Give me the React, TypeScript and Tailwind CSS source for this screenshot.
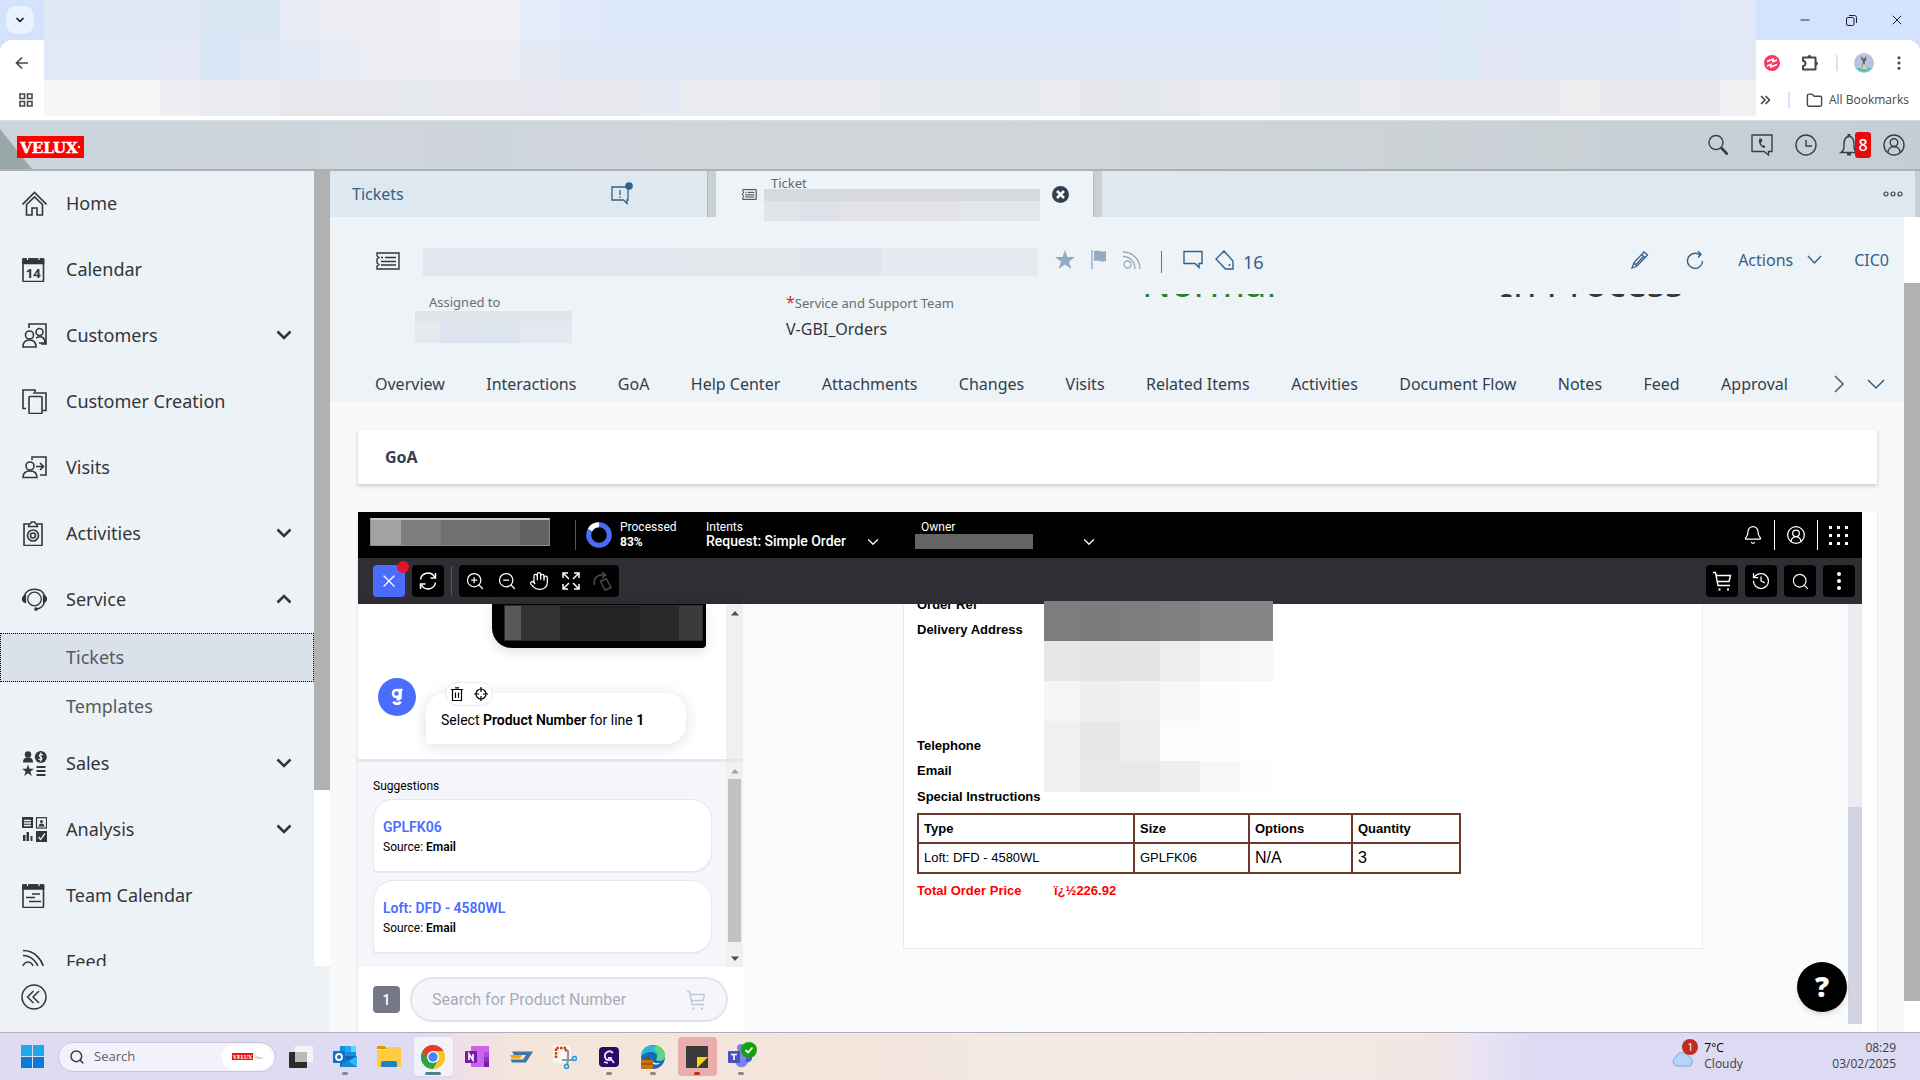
import type { ReactNode } from 'react'
import {
  Bell, ChevronDown, CircleUserRound, EllipsisVertical, Folder, Hand,
  History, Minus, Search, ShoppingCart, X, ZoomIn, ZoomOut
} from 'lucide-react'

type Cell = [span: number, color: string]

const tabStripCells: Cell[] = [
  [156, '#e0e7f7'], [40, '#dce7f6'], [40, '#dbe8f4'], [40, '#e7ecf6'], [80, '#eeeff5'], [40, '#efeef2'],
  [80, '#f1f0f5'], [40, '#e4ecfb'], [40, '#e0e9fa'], [840, '#dde8fa'], [40, '#dbe9f5'], [200, '#dee7f8'], [76, '#e2e8f8']
]
const addressCells: Cell[] = [
  [36, '#e2eaf9'], [40, '#e4ebf8'], [40, '#e4e9f7'], [40, '#e4e7f5'], [40, '#dae7f6'], [40, '#dfe8f6'],
  [40, '#e4e9f6'], [40, '#eaecf5'], [160, '#ecedf2'], [40, '#e5eaf5'], [160, '#e0e7f5'], [320, '#e1e6f5'],
  [400, '#e0e6f4'], [40, '#dce8f4'], [40, '#e2e6f5'], [200, '#e1e6f3'], [36, '#e4e9f8']
]
const bookmarkCells: Cell[] = [
  [36, '#f5f6f8'], [80, '#f4f5f7'], [40, '#efeff3'], [80, '#e9ebf0'], [120, '#e8e7ec'], [40, '#e6eaec'],
  [80, '#e8e8ed'], [40, '#e8e7f0'], [80, '#e8e9ed'], [40, '#e7eaf4'], [80, '#e9ebee'], [120, '#ebebef'],
  [160, '#e8ebee'], [40, '#ebeaee'], [40, '#e4e6eb'], [40, '#e2e7ea'], [40, '#e7e7ec'], [80, '#ebebef'],
  [80, '#e7ebee'], [40, '#ebebf0'], [160, '#e8eaee'], [40, '#ededf0'], [120, '#e9e9ee'], [36, '#f1f1f3']
]

function Cells({ cells, className = '' }: { cells: Cell[]; className?: string }) {
  return (
    <div className={`flex ${className}`} aria-hidden="true">
      {cells.map(([span, color], i) => (
        <div key={i} className="basis-0" style={{ flexGrow: span, backgroundColor: color }} />
      ))}
    </div>
  )
}

type IconProps = { w?: number; h?: number; sw?: number; box?: string; className?: string; children: ReactNode }

function Icon({ w = 25, h = 25, sw = 1.6, box, className = '', children }: IconProps) {
  return (
    <svg
      width={w}
      height={h}
      viewBox={box ?? `0 0 ${w} ${h}`}
      fill="none"
      stroke="currentColor"
      strokeWidth={sw}
      className={`shrink-0 ${className}`}
      aria-hidden="true"
    >
      {children}
    </svg>
  )
}

const icons = {
  home: (
    <Icon>
      <path d="M.5 13.500 12.500 1.500l12 12" />
      <path d="M4.500 13.500V24H10v-7h5v7h5.500V13.500l-8-7.700z" />
    </Icon>
  ),
  calendar: (
    <Icon>
      <rect x="1" y="2" width="20.500" height="22.500" rx="1" />
      <path d="M1 2h20.500v4.500H1z" fill="currentColor" />
      <path d="M5.500 0v3M17 0v3" stroke="#edf2f6" strokeWidth="1.200" />
      <text x="11.300" y="20.500" textAnchor="middle" fontSize="13" fontWeight="700" fill="currentColor" stroke="none" fontFamily="Noto Sans, sans-serif">14</text>
    </Icon>
  ),
  customers: (
    <Icon>
      <path d="M7 5V1h17v20h-5" />
      <circle cx="7.500" cy="12" r="4" />
      <path d="M1 24c0-5 3-7 6.500-7s6.500 2 6.500 7z" />
      <circle cx="17.500" cy="9" r="3.500" />
      <path d="M14 15c6-3 9 0 9 5h-6" />
    </Icon>
  ),
  creation: (
    <Icon>
      <path d="M4 19.500H1V1h12v2" />
      <path d="M11 4h13v17.500h-3" />
      <rect x="7" y="7.500" width="13" height="17" rx="1" />
    </Icon>
  ),
  visits: (
    <Icon>
      <path d="M10 5V2h14v18h-6" />
      <circle cx="8" cy="11" r="4" />
      <path d="M1 22.500c0-5 3-6.500 7-6.500s7 1.500 7 6.500z" />
      <path d="M14 11.500h7M18 8l3.500 3.500L18 15" />
    </Icon>
  ),
  activities: (
    <Icon>
      <path d="M7 3H2v21.500h18V3h-5" />
      <path d="M6.500 5.500c0-3 2-2 3-4.500h3c1 2.500 3 1.500 3 4.500z" />
      <circle cx="11" cy="14.500" r="5.500" />
      <circle cx="11" cy="14.500" r="2.500" />
    </Icon>
  ),
  service: (
    <Icon sw={1.3}>
      <circle cx="12.500" cy="12" r="6.800" />
      <path d="M2.500 9C5 0 20 0 22.500 9M22.500 15c-1 4-4 6.500-8 7" />
      <path d="M3.500 8.500v7C1.500 15 .5 14 .5 12s1-3 3-3.500zM21.500 8.500v7c2-.5 3-1.500 3-3.500s-1-3-3-3.500z" fill="currentColor" />
      <circle cx="14" cy="22" r="1.200" fill="currentColor" />
    </Icon>
  ),
  sales: (
    <Icon sw={0}>
      <g fill="currentColor">
        <circle cx="6" cy="3.500" r="3.200" />
        <path d="M1 11.500c0-4 2-5 5-5s5 1 5 5z" />
        <circle cx="18.800" cy="6" r="6" />
        <path d="m6 13.500 1.500 4.300H12l-3.600 2.700 1.400 4.500L6 22.300 2.200 25l1.400-4.500L0 17.800h4.500z" />
        <path d="M14.500 15h9v2h-9zM14.500 19h9v2h-9zM14.500 23h9v2h-9z" />
      </g>
      <path d="M21 4c-3-2-5 1-2.500 2s1.500 4-2 2M18.800 1.500v9" stroke="#edf2f6" strokeWidth="1.200" />
    </Icon>
  ),
  analysis: (
    <Icon sw={0}>
      <path d="M0 0h11v11H0zM14 14h11v11.500H14zM1 18h2.500v6H1zM4.500 15h2.500v9H4.500zM8.500 19h2v5h-2z" fill="currentColor" />
      <path d="M2 3.500h7M2 6h7M2 8.500h7M16.500 20l2 2.500 4.500-6" stroke="#edf2f6" strokeWidth="1.300" />
      <rect x="14.500" y=".7" width="10" height="10.300" stroke="currentColor" strokeWidth="1.200" />
      <circle cx="19.500" cy="4.500" r="1.500" fill="currentColor" />
      <path d="M16.500 9.500c0-4 6-4 6 0z" fill="currentColor" />
    </Icon>
  ),
  teamCalendar: (
    <Icon>
      <rect x="1" y="2" width="20.500" height="22.500" rx="1" />
      <path d="M1 2h20.500v4H1z" fill="currentColor" />
      <path d="M5.500 0v3M17 0v3" stroke="#edf2f6" strokeWidth="1.200" />
      <path d="M10 11h8M4 14.500h9M7 18.500h12" />
    </Icon>
  ),
  feed: (
    <Icon>
      <path d="M1 1.500c11 0 21 9 21 22M1 6.500c8 0 16 7 16 17" />
      <circle cx="6" cy="18" r="5" />
    </Icon>
  )
}

const ticketShape = (
  <>
    <path d="M1 1h22v16H1v-3l2-1.500L1 11V7l2-1.500L1 4z" />
    <path d="M9 5.500h11M5 9.500h15M5 13h15M5 5.500h2" />
  </>
)

const bubbleShape = <path d="M1 1.500h18v12h-3v4l-4-4H1z" />

type NavItem = { label: string; icon: ReactNode; open?: boolean; children?: string[]; expandable?: boolean }

const navItems: NavItem[] = [
  { label: 'Home', icon: icons.home },
  { label: 'Calendar', icon: icons.calendar },
  { label: 'Customers', icon: icons.customers, expandable: true },
  { label: 'Customer Creation', icon: icons.creation },
  { label: 'Visits', icon: icons.visits },
  { label: 'Activities', icon: icons.activities, expandable: true },
  { label: 'Service', icon: icons.service, expandable: true, open: true, children: ['Tickets', 'Templates'] },
  { label: 'Sales', icon: icons.sales, expandable: true },
  { label: 'Analysis', icon: icons.analysis, expandable: true },
  { label: 'Team Calendar', icon: icons.teamCalendar },
  { label: 'Feed', icon: icons.feed }
]

function BrowserChrome() {
  return (
    <header className="shrink-0 bg-[#d3e3fd] font-['Open_Sans',sans-serif] text-[#1f1f1f]">
      <div className="flex h-10">
        <div className="flex w-11 items-center pl-[6px]">
          <button aria-label="Search tabs" className="flex h-7 w-7 items-center justify-center rounded-[10px] bg-[#e9f0fe]">
            <ChevronDown size={12} strokeWidth={3.5} />
          </button>
        </div>
        <Cells cells={tabStripCells} className="flex-1" />
        <div className="flex w-[164px] items-center justify-end">
          <button aria-label="Minimize" className="flex w-[46px] justify-center"><Minus size={14} strokeWidth={1.6} /></button>
          <button aria-label="Restore" className="flex w-[46px] justify-center">
            <Icon w={12} h={12} sw={1}>
              <rect x="1.500" y="3.500" width="7.500" height="8" rx="1.500" />
              <path d="M4 1.500h5.500a2 2 0 0 1 2 2V9" />
            </Icon>
          </button>
          <button aria-label="Close" className="flex w-[46px] justify-center"><X size={16} strokeWidth={1.5} /></button>
        </div>
      </div>
      <div className="rounded-t-xl border-b border-[#d9dde0] bg-white text-[#474747]">
        <div className="flex h-10">
          <div className="flex w-11 items-center justify-center pt-[6px]">
            <button aria-label="Back">
              <Icon w={14} h={14} sw={1.7}><path d="M13 7H1.500M7 1.500 1.500 7 7 12.500" /></Icon>
            </button>
          </div>
          <Cells cells={addressCells} className="flex-1" />
          <div className="flex w-[164px] items-center gap-3 pt-[6px] pl-2">
            <Icon w={16} h={16} sw={1.8}>
              <circle cx="8" cy="8" r="8" fill="#f9385c" stroke="none" />
              <path d="M3 6.500 9 4v2.500L13 5M3 11l4-1.500V12l6-2.500" stroke="#fff" />
            </Icon>
            <Icon w={20} h={20} sw={2} className="ml-2">
              <path d="M3 4.500h12.500v12H3v-3.500a2.500 2.500 0 0 0 0-5z" strokeLinejoin="round" />
              <path d="M7.500 4a2 2 0 0 1 4 0zM16 8.500a2 2 0 0 1 0 4z" fill="currentColor" stroke="none" />
            </Icon>
            <div className="ml-1 h-4 w-[2px] bg-[#d3e3fd]" />
            <Icon w={20} h={20} sw={0} className="ml-1">
              <circle cx="10" cy="10" r="10" fill="#b9c3de" />
              <path d="M2 15h16a10 10 0 0 1-16 0z" fill="#44c9c0" />
              <path d="M7 3l2 2.500h1.500L12 3l.3 4-1.500 1.500v3.500l4 3.500H8l1-7L7.200 6z" fill="#6b5e4c" />
              <path d="M9.500 10.500 14.500 16H8z" fill="#e8d3b0" />
            </Icon>
            <button aria-label="Chrome menu" className="ml-1"><EllipsisVertical size={18} strokeWidth={2.2} /></button>
          </div>
        </div>
        <div className="flex h-9">
          <div className="flex w-11 items-center justify-center pt-1 pl-2">
            <Icon w={14} h={14} sw={1.6}>
              <path d="M1 1h4.500v4.500H1zM8.500 1H13v4.500H8.500zM1 8.500h4.500V13H1zM8.500 8.500H13V13H8.500z" />
            </Icon>
          </div>
          <Cells cells={bookmarkCells} className="flex-1" />
          <div className="flex w-[164px] items-center pt-1 pl-1">
            <Icon w={10} h={10} sw={1.6}><path d="m1 1 4 4-4 4M5.500 1l4 4-4 4" /></Icon>
            <div className="ml-[18px] h-4 w-[2px] bg-[#d3e3fd]" />
            <button className="ml-4 flex items-center gap-[6px] text-xs whitespace-nowrap">
              <Folder size={17} strokeWidth={2} />
              All Bookmarks
            </button>
          </div>
        </div>
        <div className="h-1" />
      </div>
    </header>
  )
}

function ShellBar() {
  return (
    <div className="relative flex h-[50px] shrink-0 items-center justify-between border-b-2 border-[#aab3b2] bg-linear-to-r from-[#ccd4dc] via-[#d1d6d9] to-[#c6ced4] pr-[15px] pl-[17px] text-[#32404e]">
      <svg viewBox="0 0 32 48" className="absolute top-0 left-0 h-12 w-8" aria-hidden="true">
        <path d="M0 8 32 48H0z" fill="#9aa8a8" />
      </svg>
      <div className="relative mt-1 h-[22px] w-[67px] bg-[#ff0000]">
        <svg viewBox="0 0 67 22" className="h-full w-full" role="img" aria-label="VELUX">
          <text x="32" y="17" textAnchor="middle" fontFamily="DejaVu Serif, serif" fontWeight="700" fontSize="15" fill="#fff" stroke="#fff" strokeWidth=".4">VELUX</text>
          <circle cx="62" cy="11" r="1.200" fill="#fff" />
        </svg>
      </div>
      <div className="flex items-center gap-[22px]">
        <button aria-label="Search">
          <Icon w={22} h={22} sw={1.4}><circle cx="9" cy="8.500" r="7" /><path d="m14 13.500 6.500 7" strokeWidth="2.600" /></Icon>
        </button>
        <button aria-label="Phone">
          <Icon w={22} h={22} sw={1.4}>
            <path d="M1 1h20v16.500h-3.500V21L13 17.500H1z" />
            <path d="M8.500 4.500c-2 3 1 9 5 9.500l1-1.500-2-1.500-1 .8c-1-.8-1.500-2.300-1.500-3.500l1.200-.5-.2-3z" fill="currentColor" stroke="none" />
          </Icon>
        </button>
        <button aria-label="Recent"><Icon w={22} h={22} sw={1.4}><circle cx="11" cy="11" r="10" /><path d="M11 6v6h6" /></Icon></button>
        <button aria-label="Notifications" className="relative">
          <Icon w={22} h={22} sw={1.4}>
            <path d="M2 18.500c3-2 3-4 3-8 0-5 2-8 5-8s5 3 5 8c0 4 0 6 3 8z" />
            <path d="M8 20h4M10 0v3" strokeWidth="3" />
          </Icon>
          <span className="absolute -top-[2px] left-4 flex h-[26px] w-4 items-center justify-center rounded-[3px] bg-[#e8090f] text-base font-medium text-white">8</span>
        </button>
        <button aria-label="Profile">
          <Icon w={22} h={22} sw={1.4}>
            <circle cx="11" cy="11" r="10" />
            <circle cx="11" cy="8.500" r="3.800" />
            <path d="M5 18c0-7 12-7 12 0" />
          </Icon>
        </button>
      </div>
    </div>
  )
}

function Sidebar() {
  return (
    <aside className="flex w-[330px] shrink-0 flex-col bg-[#edf2f6] text-[#32363a]">
      <div className="flex min-h-0 flex-1">
        <nav className="flex-1 overflow-hidden text-lg">
          {navItems.map((item) => {
            const body = (
              <>
                <span className="flex w-[44px] items-center">{item.icon}</span>
                <span className="flex-1 text-left">{item.label}</span>
                {item.expandable && (
                  <Icon w={16} h={10} sw={2.6} className={item.open ? 'rotate-180' : ''}><path d="m1.500 1.500 6.500 6.500 6.500-6.500" /></Icon>
                )}
              </>
            )
            return (
              <div key={item.label}>
                {item.expandable
                  ? <button aria-expanded={!!item.open} className="flex h-[66px] w-full items-center px-[22px] pb-[2px]">{body}</button>
                  : <a href="#" className="flex h-[66px] items-center px-[22px] pb-[2px]">{body}</a>}
                {item.children?.map((child, i) => (
                  <a
                    key={child}
                    href="#"
                    className={`flex h-[49px] items-center border border-dotted pb-[2px] pl-[65px] text-[#55595e] ${i === 0 ? 'border-black bg-[#dae1eb]' : 'border-transparent'}`}
                  >
                    {child}
                  </a>
                ))}
              </div>
            )
          })}
        </nav>
        <div className="w-4 bg-white"><div className="h-[619px] bg-[#b1b1b1]" /></div>
      </div>
      <div className="flex h-[66px] shrink-0 items-center pb-1 pl-[21px]">
        <button aria-label="Collapse navigation">
          <Icon w={26} h={26} sw={1.5}>
            <circle cx="13" cy="13" r="12" />
            <path d="m12.500 7-6 6 6 6M18 7l-6 6 6 6" />
          </Icon>
        </button>
      </div>
    </aside>
  )
}

function TabStrip() {
  return (
    <div className="flex h-[46px] shrink-0 bg-[#c9d0d4] pr-[5px] text-[#346187]">
      <div className="flex w-[378px] items-center justify-between border-r border-[#a9b8c4] bg-[#dde8f0] pr-[74px] pl-[22px]">
        <button className="text-base">Tickets</button>
        <Icon w={22} h={24} sw={1.3}>
          <path d="M1 5h16v13h-1v3.500L12.500 18H1z" />
          <path d="M9 8v5M9 14.500v1.500" />
          <circle cx="18" cy="4" r="3.800" fill="#346187" stroke="none" />
        </Icon>
      </div>
      <div className="relative ml-2 flex w-[378px] border-r border-[#b5bec4] bg-[#eef3f7] pr-6 pl-[26px] text-[#32404e]">
        <div className="flex items-center"><Icon w={15} h={11} sw={1.6} box="0 0 24 18">{ticketShape}</Icon></div>
        <span className="pt-[2px] pl-[14px] text-[13px] leading-5 text-[#60666c]">Ticket</span>
        <div className="absolute top-[18px] left-[48px] w-[276px]">
          <div className="h-3 bg-[#d6dadd]" />
          <Cells cells={[[36, '#dfe5e8'], [40, '#dfe1ea'], [120, '#e3e2e7'], [80, '#e2e7ea']]} className="h-5" />
        </div>
        <button aria-label="Close tab" className="ml-auto">
          <Icon w={17} h={17} sw={2.6}>
            <circle cx="8.500" cy="8.500" r="8.500" fill="currentColor" stroke="none" />
            <path d="m5 5 7 7M12 5l-7 7" stroke="#fff" />
          </Icon>
        </button>
      </div>
      <div className="ml-2 flex flex-1 items-center justify-end bg-[#dde8f0] pr-3 text-[#32404e]">
        <button aria-label="More tabs">
          <Icon w={20} h={6} sw={1.2}><circle cx="3" cy="3" r="2" /><circle cx="10" cy="3" r="2" /><circle cx="17" cy="3" r="2" /></Icon>
        </button>
      </div>
    </div>
  )
}

const objectTabs = [
  'Overview', 'Interactions', 'GoA', 'Help Center', 'Attachments', 'Changes', 'Visits',
  'Related Items', 'Activities', 'Document Flow', 'Notes', 'Feed', 'Approval'
]

function ObjectHeader() {
  return (
    <section className="h-[185px] shrink-0 bg-[#eef3f7] text-[#346187]">
      <div className="flex h-[77px] items-center pt-2 pr-[15px] pl-[46px]">
        <Icon w={24} h={18} sw={1.4} className="mt-[3px] text-[#32363a]">{ticketShape}</Icon>
        <Cells cells={[[260, '#e2e6ee'], [120, '#e3e7ea'], [80, '#e1e4ee'], [156, '#e5e9f0']]} className="mt-1 ml-[23px] h-7 w-[615px]" />
        <div className="ml-[17px] flex items-center gap-4 text-[#91abc3]">
          <Icon w={20} h={20} sw={0}><path d="m10 0 2.400 7H20l-6 4.500 2.300 7.500-6.300-4.600L3.700 19 6 11.500 0 7h7.600z" fill="currentColor" /></Icon>
          <Icon w={16} h={20} sw={1.4}><path d="M1 0v19" /><path d="M3 1c4-2 7 2 12 0v10c-5 2-8-2-12 0z" fill="currentColor" stroke="none" /></Icon>
          <Icon w={18} h={18} sw={1.3}><path d="M0 1c9 0 17 7 17 17M0 5.500c7 0 12 5 12 12.500" /><circle cx="4.500" cy="13.500" r="3.500" /></Icon>
        </div>
        <div className="mt-1 ml-5 h-[22px] w-px bg-[#6a7785]" />
        <div className="ml-[21px] flex items-center gap-3">
          <Icon w={20} h={19} sw={1.4}>{bubbleShape}</Icon>
          <Icon w={20} h={20} sw={1.4}><path d="M9 1 1 9l9.500 10H18V11z" /><circle cx="14.500" cy="15" r="1" fill="currentColor" stroke="none" /></Icon>
          <span className="mt-1 -ml-1 text-lg leading-6">16</span>
        </div>
        <div className="ml-auto flex items-center">
          <button aria-label="Edit"><Icon w={18} h={18} sw={1.3}><path d="m1 17 2-5.500L13 1l3.500 3-10.500 11zM10.500 3.500l4 3.500M3 12l3 3M12.500 5.500l-8 8.500" /></Icon></button>
          <button aria-label="Refresh" className="ml-[37px]"><Icon w={18} h={18} sw={1.4}><path d="M16.500 10A7.500 7.500 0 1 1 13 3.500h2M12 0l3 3.500-3 3" /></Icon></button>
          <button className="ml-[34px] flex items-center gap-[14px] text-base">
            Actions
            <Icon w={15} h={10} sw={1.5}><path d="m1 1 6.500 7L14 1" /></Icon>
          </button>
          <button className="ml-8 text-base">CIC0</button>
        </div>
      </div>

      <div className="flex h-[63px] items-start">
        <div className="w-[456px] pl-[85px]">
          <div className="pl-[14px] text-[13px] leading-[17px] text-[#6a6d70]">Assigned to</div>
          <div className="w-[157px]">
            <div className="h-[10px] bg-[#e0e4e9]" />
            <Cells cells={[[25, '#e5eaee'], [40, '#dee4ef'], [40, '#dce5ef'], [52, '#e4e9f1']]} className="h-[22px]" />
          </div>
        </div>
        <div className="w-[356px]">
          <div className="text-[13px] leading-[17px] text-[#6a6d70]"><span className="text-base leading-none text-[#cc3333]">*</span>Service and Support Team</div>
          <div className="mt-[7px] text-base leading-5 text-[#32363a]">V-GBI_Orders</div>
        </div>
        {/* status row is scrolled under the title bar, only its lowest pixels stay visible */}
        <div className="flex h-[3px] w-[358px] items-end overflow-hidden">
          <span className="text-[38px] leading-[30px] text-[#2b7d2b]">Normal</span>
        </div>
        <div className="flex h-[3px] flex-1 items-end overflow-hidden">
          <span className="text-[38px] leading-[30px] text-[#32363a]">In Process</span>
        </div>
      </div>

      <div className="flex h-[45px] items-start pt-[15px] pr-[19px] pl-[45px] text-[#32404e]">
        <nav className="flex flex-1 justify-between pr-[45px] text-base leading-6">
          {objectTabs.map(tab => <a key={tab} href="#" className="whitespace-nowrap">{tab}</a>)}
        </nav>
        <div className="flex h-6 items-center gap-[22px] text-[#346187]">
          <button aria-label="Next tabs"><Icon w={12} h={18} sw={1.5}><path d="m2 1 8 8-8 8" /></Icon></button>
          <button aria-label="All tabs"><Icon w={18} h={12} sw={1.5}><path d="m1 2 8 8 8-8" /></Icon></button>
        </div>
      </div>
    </section>
  )
}

const toolGroup = [
  { label: 'Zoom in', icon: <ZoomIn size={20} strokeWidth={1.5} /> },
  { label: 'Zoom out', icon: <ZoomOut size={20} strokeWidth={1.5} /> },
  { label: 'Pan', icon: <Hand size={20} strokeWidth={1.5} /> },
  {
    label: 'Fit to screen',
    icon: <Icon w={18} h={18} sw={1.5}><path d="M1 6V1h5M12 1h5v5M17 12v5h-5M6 17H1v-5M1 1l6 6M17 1l-6 6M17 17l-6-6M1 17l6-6" /></Icon>
  },
  {
    label: 'Rotate',
    icon: (
      <Icon w={20} h={20} sw={1.5} className="text-[#4c4c4f]">
        <path d="M1.500 14C0 6 6 3 12 4M9 1l3.500 3L9 7" />
        <path d="m7.500 10 6-2 4.500 8.500-6 2.500z" />
      </Icon>
    )
  }
]

const rightTools = [
  {
    label: 'Cart',
    icon: (
      <Icon w={20} h={20} sw={1.4}>
        <path d="M1 1.500h2.500L6 14.500h12M4.200 4.500h14.300l-1.500 6H5.300" />
        <path d="M6.500 17.500h2v2h-2zM15 17.500h2v2h-2z" fill="currentColor" stroke="none" />
      </Icon>
    )
  },
  { label: 'History', icon: <History size={20} strokeWidth={1.5} /> },
  { label: 'Find', icon: <Search size={19} strokeWidth={1.5} /> },
  {
    label: 'More',
    icon: <Icon w={4} h={18} sw={0}><g fill="currentColor"><circle cx="2" cy="2" r="2" /><circle cx="2" cy="9" r="2" /><circle cx="2" cy="16" r="2" /></g></Icon>
  }
]

function GoaBars() {
  return (
    <div className="shrink-0 text-white">
      <div className="flex h-[46px] items-center bg-black pr-[14px] pl-3">
        <Cells
          cells={[[30, '#a3a3a3'], [40, '#7e7e7e'], [40, '#707070'], [40, '#6e6e6e'], [29, '#626262']]}
          className="mb-[6px] h-7 w-[180px] border border-t-2 border-[#8a8a8a] border-t-[#c8c8c8]"
        />
        <div className="ml-[25px] h-[30px] w-px bg-[#55555a]" />
        <Icon w={26} h={26} sw={5} className="ml-[10px]">
          <circle cx="13" cy="13" r="10.300" stroke="#4a6cf7" />
          <path d="M4 7.900A10.300 10.300 0 0 1 13 2.700" stroke="#fff" />
        </Icon>
        <div className="ml-2 w-[86px] text-xs leading-[15px]">
          <div>Processed</div>
          <div className="font-bold">83%</div>
        </div>
        <div className="flex w-[215px] flex-col pb-px">
          <label htmlFor="intent" className="text-xs leading-[14px]">Intents</label>
          <div className="flex h-[15px] items-center">
            <select id="intent" className="w-[158px] appearance-none bg-transparent text-sm leading-[15px] font-medium text-white">
              <option>Request: Simple Order</option>
            </select>
            <ChevronDown size={18} strokeWidth={1.6} />
          </div>
        </div>
        <div className="flex flex-col pb-px">
          <span className="text-xs leading-[14px]">Owner</span>
          <button aria-label="Owner" className="flex h-[15px] items-center">
            <span className="-ml-[6px] h-[15px] w-[118px] bg-[#646464]" />
            <ChevronDown size={18} strokeWidth={1.6} className="ml-[47px]" />
          </button>
        </div>
        <div className="ml-auto flex items-center gap-[11px]">
          <button aria-label="Alerts"><Bell size={20} strokeWidth={1.5} /></button>
          <div className="h-[30px] w-px bg-white" />
          <button aria-label="Account"><CircleUserRound size={20} strokeWidth={1.5} /></button>
          <div className="h-[30px] w-px bg-white" />
          <button aria-label="Apps" className="grid grid-cols-3 gap-[5px]">
            {Array.from({ length: 9 }, (_, i) => <span key={i} className="h-[3px] w-[3px] bg-white" />)}
          </button>
        </div>
      </div>
      <div className="flex h-[46px] items-center bg-[#2f2e34] pr-[7px] pl-[15px]">
        <button aria-label="Close panel" className="relative flex h-8 w-8 items-center justify-center rounded bg-[#4a6cff]">
          <X size={20} strokeWidth={1.5} />
          <span className="absolute -top-1 -right-1 h-3 w-3 rounded-full bg-[#e8112d]" />
        </button>
        <button aria-label="Reload" className="ml-[7px] flex h-8 w-8 items-center justify-center rounded bg-black">
          <Icon w={18} h={18} sw={1.5}><path d="M1.500 7.500A7.500 7.500 0 0 1 15.500 5M16.500 1v5h-5M16.500 10.500A7.500 7.500 0 0 1 2.500 13M1.500 17v-5h5" /></Icon>
        </button>
        <div className="ml-[7px] h-[30px] w-px bg-[#55555a]" />
        <div className="ml-[7px] flex rounded bg-black">
          {toolGroup.map(tool => (
            <button key={tool.label} aria-label={tool.label} className="flex h-8 w-8 items-center justify-center">{tool.icon}</button>
          ))}
        </div>
        <div className="ml-auto flex gap-[7px]">
          {rightTools.map(tool => (
            <button key={tool.label} aria-label={tool.label} className="flex h-8 w-8 items-center justify-center rounded bg-black">{tool.icon}</button>
          ))}
        </div>
      </div>
    </div>
  )
}

function Arrow({ down = false, color = '#4d4d4d' }: { down?: boolean; color?: string }) {
  return (
    <svg width="8" height="5" viewBox="0 0 8 5" className={`shrink-0 ${down ? 'rotate-180' : ''}`} aria-hidden="true">
      <path d="M4 0 8 4.500H0z" fill={color} />
    </svg>
  )
}

function ChatPanel() {
  return (
    <div className="flex w-[385px] shrink-0 flex-col bg-white shadow-[2px_0_8px_rgba(0,0,0,0.06)]">
      <div className="flex h-[155px] shrink-0">
        <div className="flex-1">
          <div className="mr-5 ml-auto h-11 w-[214px] rounded-br rounded-bl-[20px] bg-black pt-[1px] pl-3 shadow-[0_4px_12px_rgba(0,0,0,0.12)]">
            <Cells
              cells={[[16, '#59595b'], [40, '#333333'], [80, '#232323'], [40, '#29292b'], [23, '#3b3b3b']]}
              className="h-9 w-[199px] border border-[#2c2c2c]"
            />
          </div>
          <div className="mt-[30px] flex pl-5">
            <div className="flex h-[38px] w-[38px] items-center justify-center rounded-full bg-[#4a6cff] text-white">
              <Icon w={12} h={18} sw={2.6}>
                <circle cx="5.500" cy="5.500" r="3.500" />
                <path d="M7.500 2h4M9.500 2v7c0 2-2 2.500-4 2.500M2.500 13.500c1 3 6 3 7 0" />
              </Icon>
            </div>
            <div className="relative mt-[15px] ml-[10px] flex h-[51px] w-[260px] items-center rounded-[20px] rounded-bl bg-white pt-[2px] pl-[15px] text-sm text-black shadow-[0_2px_16px_rgba(0,0,0,0.13)]">
              <div className="absolute -top-[11px] left-[19px] flex h-6 w-12 items-center justify-center gap-[11px] rounded-full border border-[#e3e8fb] bg-white">
                <button aria-label="Delete">
                  <Icon w={12} h={14} sw={1.2}><path d="M0 2.500h12M4 .8h4M1.500 2.500v11h9v-11M4.500 5.500v5.500M7.500 5.500v5.500" /></Icon>
                </button>
                <button aria-label="Locate">
                  <Icon w={14} h={14} sw={1.2}><circle cx="7" cy="7" r="5" /><path d="M7 0v5M7 9v5M0 7h5M9 7h5" /></Icon>
                </button>
              </div>
              <p>Select <b className="font-semibold">Product Number</b> for line <b>1</b></p>
            </div>
          </div>
        </div>
        <div className="flex w-[17px] justify-center bg-[#f0f0f0] pt-[7px]"><Arrow /></div>
      </div>

      <div className="flex h-[208px] shrink-0 border-t-[3px] border-[#e5e6ee] bg-[#f5f6fb] text-xs text-black">
        <div className="flex flex-1 flex-col gap-2 pt-4 pr-[14px] pl-[15px]">
          <h3 className="-mb-[3px] leading-4">Suggestions</h3>
          {['GPLFK06', 'Loft: DFD - 4580WL'].map(name => (
            <button key={name} className="flex h-[73px] shrink-0 flex-col justify-center rounded-[20px] rounded-bl border border-[#e5e6ee] bg-white pl-[9px] text-left shadow-[0_1px_1px_rgba(0,0,0,0.06)]">
              <span className="text-sm leading-5 font-semibold text-[#4a6cff]">{name}</span>
              <span className="mt-[2px] leading-4">Source: <b className="font-semibold">Email</b></span>
            </button>
          ))}
        </div>
        <div className="flex w-[17px] flex-col items-center bg-[#f0f0f0] pt-[7px] pb-[6px]">
          <Arrow color="#a3a3a3" />
          <div className="mt-[5px] mb-auto h-[163px] w-[13px] bg-[#c1c1c1]" />
          <Arrow down />
        </div>
      </div>

      <div className="flex items-center gap-[10px] pt-[10px] pr-[15px] pl-[15px]">
        <span className="flex h-[27px] w-[27px] shrink-0 items-center justify-center rounded bg-[#747885] text-sm font-medium text-white">1</span>
        <div className="flex h-[45px] flex-1 items-center rounded-full border-2 border-[#e3e4ea] bg-[#f5f6fb] pr-5 pl-5">
          <input
            aria-label="Search for Product Number"
            placeholder="Search for Product Number"
            className="w-0 flex-1 bg-transparent text-base outline-none placeholder:text-[#a9acb8]"
          />
          <Icon w={20} h={20} sw={1.4} className="text-[#c3c6d2]">
            <path d="M1 1.500h2.500L6 14.500h12M4.200 4.500h14.300l-1.500 6H5.300" />
            <path d="M6.500 17.500h2v2h-2zM15 17.500h2v2h-2z" fill="currentColor" stroke="none" />
          </Icon>
        </div>
      </div>
    </div>
  )
}

const addressBlocks: Cell[][] = [
  [[36, '#7d7d7f'], [40, '#7c7c7c'], [40, '#7d7d7f'], [40, '#818183'], [73, '#868688']],
  [[36, '#e6e6e6'], [40, '#e4e4e4'], [40, '#e5e5e5'], [40, '#ededed'], [40, '#f5f5f5'], [33, '#f7f7f7']],
  [[36, '#f6f6f6'], [40, '#eeeeee'], [40, '#f1f1f1'], [40, '#f7f7f7'], [40, '#fdfdfd'], [33, '#ffffff']],
  [[36, '#f0f0f0'], [40, '#e7e7e7'], [40, '#eeeeee'], [40, '#fcfcfc'], [40, '#fefefe'], [33, '#ffffff']],
  [[36, '#f1f1f1'], [40, '#eaeaea'], [40, '#e8e8e8'], [40, '#efefef'], [40, '#f7f7f7'], [33, '#fdfdfd']]
]

function EmailDocument() {
  return (
    <div className="relative flex flex-1 bg-[#fafbfd]">
      <div className="flex-1 pr-[145px] pl-[160px]">
        <div className="relative h-[345px] border-x border-b border-[#e9ebef] bg-white pl-[13px] font-['Liberation_Sans',sans-serif] text-[13px] leading-6 font-bold text-black">
          <div className="flex h-[13px] items-end overflow-hidden"><span>Order Ref</span></div>
          <div className="h-[117px] pt-px">Delivery Address</div>
          <div className="h-[25px]">Telephone</div>
          <div className="h-[25px]">Email</div>
          <div className="h-[29px] pt-px">Special Instructions</div>
          <div className="absolute -top-[3px] left-[140px] w-[229px]">
            {addressBlocks.map((row, i) => (
              <Cells key={i} cells={row} className={i === 4 ? 'h-[31px]' : 'h-10'} />
            ))}
          </div>
          <table className="w-[544px] table-fixed border-collapse text-left">
            <thead>
              <tr className="h-[29px]">
                <th className="w-[216px] border-2 border-[#6b3a2c] pl-[5px]">Type</th>
                <th className="w-[115px] border-2 border-[#6b3a2c] pl-[5px]">Size</th>
                <th className="w-[103px] border-2 border-[#6b3a2c] pl-[5px]">Options</th>
                <th className="border-2 border-[#6b3a2c] pl-[5px]">Quantity</th>
              </tr>
            </thead>
            <tbody>
              <tr className="h-[30px] font-normal">
                <td className="border-2 border-[#6b3a2c] pl-[5px]">Loft: DFD - 4580WL</td>
                <td className="border-2 border-[#6b3a2c] pl-[5px]">GPLFK06</td>
                <td className="border-2 border-[#6b3a2c] pl-[5px] text-base">N/A</td>
                <td className="border-2 border-[#6b3a2c] pl-[5px] text-base">3</td>
              </tr>
            </tbody>
          </table>
          <div className="flex pt-[5px] text-[#ff0000]">
            <span className="w-[137px]">Total Order Price</span>
            <span>ï¿½226.92</span>
          </div>
        </div>
      </div>
      <div className="mb-2 flex w-[14px] flex-col bg-[#ebecf1]">
        <div className="mt-[203px] flex-1 bg-[#d2d5e1]" />
      </div>
      <button
        aria-label="Help"
        className="absolute right-[15px] bottom-5 flex h-[50px] w-[50px] items-center justify-center rounded-full bg-black pb-[2px] font-['Open_Sans',sans-serif] text-[28px] font-extrabold text-white shadow-md"
      >
        ?
      </button>
    </div>
  )
}

const taskbarApps: { label: string; icon: ReactNode; running?: boolean; tile?: string; bar?: string }[] = [
  {
    label: 'Task view',
    icon: (
      <svg width="24" height="24" viewBox="0 0 24 24">
        <rect x="0" y="7" width="18" height="16" rx="1" fill="#2b2b2b" />
        <rect x="6" y="1" width="18" height="16" rx="1" fill="#f4f4f4" />
        <path d="M6 7h12v10H6z" fill="#b9b9b9" />
      </svg>
    )
  },
  {
    label: 'Outlook',
    running: true,
    icon: (
      <svg width="24" height="24" viewBox="0 0 24 24">
        <path d="M7 1h16v11H7z" fill="#1490df" /><path d="M12 1h6v6h-6z" fill="#28a8ea" /><path d="M18 1h5v6h-5z" fill="#50d9ff" />
        <path d="M7 11h17v11H7z" fill="#1066b8" /><path d="m24 11-10 6 10 5z" fill="#35b8f1" /><path d="M7 22h17l-12-8z" fill="#1a86d9" />
        <rect x="0" y="6" width="12" height="12" rx="1" fill="#0f72c9" />
        <circle cx="6" cy="12" r="3" fill="none" stroke="#fff" strokeWidth="1.800" />
      </svg>
    )
  },
  {
    label: 'File Explorer',
    icon: (
      <svg width="24" height="24" viewBox="0 0 24 24">
        <path d="M0 2q0-1 1-1h7l2 3H0z" fill="#d99a00" /><path d="M0 5h9l2-3h12q1 0 1 1v19H0z" fill="#fdcd3f" />
        <path d="M4 22v-4q0-2 2-2h12q2 0 2 2v4z" fill="#1b82c8" />
      </svg>
    )
  },
  {
    label: 'Chrome',
    tile: 'bg-white/60 shadow-xs',
    bar: 'w-4 bg-[#4f7f91]',
    running: true,
    icon: (
      <svg width="24" height="24" viewBox="0 0 24 24">
        <circle cx="12" cy="12" r="12" fill="#fcc31e" />
        <path d="M1.600 6A12 12 0 0 0 12 24l5.200-9L12 12z" fill="#2ba24c" />
        <path d="M12 6h10.400A12 12 0 0 0 1.600 6L7 15z" fill="#e33b2e" />
        <circle cx="12" cy="12" r="6" fill="#fff" /><circle cx="12" cy="12" r="4.700" fill="#4285f4" />
      </svg>
    )
  },
  {
    label: 'OneNote',
    icon: (
      <svg width="24" height="24" viewBox="0 0 24 24">
        <path d="M6 1h18v21H6z" fill="#ca64ea" /><path d="M19 7h5v5h-5z" fill="#ae4bd5" /><path d="M19 12h5v5h-5z" fill="#9332bf" /><path d="M19 17h5v5h-5z" fill="#7719aa" />
        <rect x="0" y="6" width="12" height="12" rx="1" fill="#7719aa" /><path d="M4 15V9l4 6V9" stroke="#fff" strokeWidth="1.600" fill="none" />
      </svg>
    )
  },
  {
    label: 'SAP Logon',
    icon: (
      <svg width="24" height="24" viewBox="0 0 24 24">
        <path d="M3 6.500h21l-7 11H3l-1.500-3H14l3-4.500H5z" fill="#3f76a8" /><path d="M1 10h12l-2 3.500H2.500z" fill="#f5a800" />
      </svg>
    )
  },
  {
    label: 'Snipping Tool',
    icon: (
      <svg width="24" height="24" viewBox="0 0 24 24">
        <rect x="0" y="0" width="18" height="18" rx="2" fill="#f7f7f7" />
        <path d="M3 13V3h10v4" fill="none" stroke="#d83b01" strokeWidth="2.500" strokeDasharray="2.500 1" />
        <path d="M15 5v10h-6M15 15l-1 5M15 15h5" fill="none" stroke="#8e979e" strokeWidth="2.200" />
        <circle cx="21.500" cy="13.500" r="2" fill="none" stroke="#1f9ede" strokeWidth="1.600" /><circle cx="13.500" cy="21.500" r="2" fill="none" stroke="#1f9ede" strokeWidth="1.600" />
      </svg>
    )
  },
  {
    label: 'Assistant',
    running: true,
    icon: (
      <svg width="20" height="20" viewBox="0 0 20 20">
        <rect width="20" height="20" rx="4" fill="#2a0a66" />
        <path d="M14 6C10 2 5 6 6 10s6 4 6 1H9M12 12l3 4M5 15l4 1" fill="none" stroke="#e9dcff" strokeWidth="1.800" />
      </svg>
    )
  },
  {
    label: 'Edge',
    running: true,
    icon: (
      <svg width="24" height="24" viewBox="0 0 24 24">
        <circle cx="12" cy="12" r="12" fill="#1668b8" />
        <path d="M0 12C0 4 6 0 12 0s12 5 12 11c0 4-4 6-9 4 3-5-1-8-5-8-6 0-8 3-10 5z" fill="#2bb6d9" />
        <path d="M15 0c6 2 9 6 9 11 0 4-4 6-9 4 4-6 1-9-2-10z" fill="#5fd77a" />
        <path d="M10 12c0 6 5 7 9 6-2 2-6 2-8 0z" fill="#fff" />
        <rect x="0" y="15" width="12" height="9" rx="1" fill="#c9730f" /><path d="M0 19h12" stroke="#7a430a" /><path d="M4 15v-1.500h4V15" stroke="#7a430a" fill="none" />
      </svg>
    )
  },
  {
    label: 'Sticky Notes',
    tile: 'bg-[#e9aeab]',
    bar: 'w-[6px] bg-[#c42b1c]',
    running: true,
    icon: (
      <svg width="22" height="22" viewBox="0 0 22 22">
        <path d="M0 0h22v22H0z" fill="#3a3a3a" /><path d="M11 11h11L11 22z" fill="#ffd600" />
      </svg>
    )
  },
  {
    label: 'Teams',
    running: true,
    icon: (
      <svg width="30" height="26" viewBox="0 0 30 26" className="mb-1 ml-1">
        <circle cx="13" cy="6" r="4" fill="#7b83eb" /><path d="M7 9h13v8a6 6 0 0 1-13 3z" fill="#7b83eb" /><path d="M18 9h6v8q-2 4-6 3z" fill="#5059c9" />
        <rect x="0" y="9" width="12" height="12" rx="1" fill="#4b53bc" /><path d="M3 12.500h6M6 12.500V18" stroke="#fff" strokeWidth="1.600" />
        <circle cx="21" cy="8" r="8" fill="#13a10e" /><path d="m17.500 8 2.500 2.500 4.500-5" fill="none" stroke="#fff" strokeWidth="1.800" />
      </svg>
    )
  }
]

function Taskbar() {
  return (
    <footer className="flex h-12 shrink-0 items-center border-t border-[#b1abbb] bg-[linear-gradient(90deg,#dedbf3_0%,#dedbf3_22%,#f0dfe8_24%,#f4e5db_27%,#f5e5dd_45%,#f1e9e3_52%,#f1e8e5_75%,#eae3f4_77%,#dddaf3_80%)] pr-6 pl-[21px] font-['Open_Sans',sans-serif] text-[#3d3d3d]">
      <button aria-label="Start">
        <svg width="23" height="23" viewBox="0 0 23 23" className="block">
          <path d="M0 0h11v11H0zM12 0h11v11H12z" fill="#22a7e8" /><path d="M0 12h11v11H0zM12 12h11v11H12z" fill="#0a7bd6" />
        </svg>
      </button>
      <div className="ml-[14px] flex h-[30px] w-[218px] items-center rounded-full border border-[#c9c5dd] bg-[#f3f1fb] pr-[2px] pl-[10px]">
        <Search size={16} strokeWidth={2.2} />
        <input aria-label="Search" placeholder="Search" className="ml-[9px] w-0 flex-1 bg-transparent text-[13px] outline-none placeholder:text-[#5f5d6a]" />
        <span className="flex h-[26px] w-[51px] items-center justify-center rounded-full bg-white">
          <svg width="31" height="8" viewBox="0 0 31 8" aria-hidden="true">
            <path d="M0 0h21v7H0z" fill="#ec1515" />
            <text x="1" y="6" fontSize="5" fontWeight="700" fontFamily="DejaVu Serif, serif" fill="#fff">VELUX</text>
            <text x="23" y="6" fontSize="4" fontFamily="Open Sans, sans-serif" fill="#777">One</text>
          </svg>
        </span>
      </div>
      <div className="ml-[3px] flex">
        {taskbarApps.map(app => (
          <button key={app.label} aria-label={app.label} className="relative flex h-[47px] w-11 items-center justify-center">
            <span className={`flex h-[39px] w-[39px] items-center justify-center rounded ${app.tile ?? ''}`}>{app.icon}</span>
            {app.running && <span className={`absolute bottom-[5px] h-[3px] rounded-full ${app.bar ?? 'w-[6px] bg-[#8a8688]'}`} />}
          </button>
        ))}
      </div>
      <div className="ml-auto flex items-center pb-px text-xs leading-4">
        <div className="relative">
          <Icon w={26} h={24} sw={1}>
            <path d="M6 22a5 5 0 0 1 0-9 7 7 0 0 1 13 0 5 5 0 0 1 1 9z" fill="#b7d3f7" stroke="#7ea6e6" />
          </Icon>
          <span className="absolute -top-[5px] left-3 flex h-4 w-4 items-center justify-center rounded-full bg-[#c42b1c] text-[11px] text-white">1</span>
        </div>
        <div className="ml-2 w-[58px]">
          <div className="text-black">7°C</div>
          <div>Cloudy</div>
        </div>
        <div className="ml-[70px] text-right">
          <div>08:29</div>
          <div>03/02/2025</div>
        </div>
      </div>
    </footer>
  )
}

export default function App() {
  return (
    <div className="flex h-screen flex-col overflow-hidden font-['Noto_Sans',sans-serif]">
      <BrowserChrome />
      <ShellBar />
      <div className="flex min-h-0 flex-1">
        <Sidebar />
        <main className="flex min-w-0 flex-1 flex-col">
          <TabStrip />
          <div className="flex min-h-0 flex-1">
            <div className="flex min-w-0 flex-1 flex-col bg-[#f9f9f9]">
              <ObjectHeader />
              <div className="mt-7 mr-[27px] ml-7 flex h-[54px] shrink-0 items-center bg-white pb-px pl-[27px] shadow-[0_2px_4px_rgba(0,0,0,0.2)]">
                <h2 className="text-base font-bold text-[#32404e]">GoA</h2>
              </div>
              <div className="mt-7 mr-[27px] ml-7 flex min-h-0 flex-1 flex-col bg-white pr-[15px] font-['Roboto',sans-serif] shadow-sm">
                <GoaBars />
                <div className="flex min-h-0 flex-1">
                  <ChatPanel />
                  <EmailDocument />
                </div>
              </div>
            </div>
            <div className="w-4 bg-white pt-[66px]"><div className="h-[718px] bg-[#b1b1b1]" /></div>
          </div>
        </main>
      </div>
      <Taskbar />
    </div>
  )
}
